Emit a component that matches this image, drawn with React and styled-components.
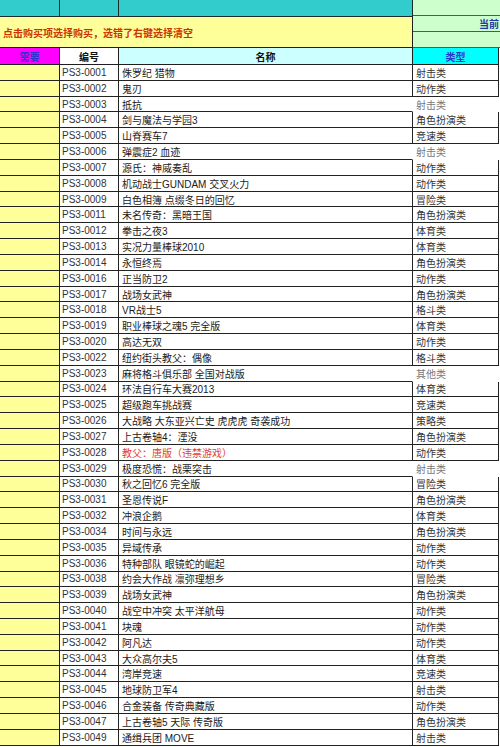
import React from "react";
import styled, { createGlobalStyle } from "styled-components";

const games = [
  ["PS3-0001", "侏罗纪 猎物", "射击类"],
  ["PS3-0002", "鬼刃", "动作类"],
  ["PS3-0003", "抵抗", "射击类", "bare"],
  ["PS3-0004", "剑与魔法与学园3", "角色扮演类"],
  ["PS3-0005", "山脊赛车7", "竞速类"],
  ["PS3-0006", "弹震症2 血迹", "射击类", "bare"],
  ["PS3-0007", "源氏：神威奏乱", "动作类"],
  ["PS3-0008", "机动战士GUNDAM 交叉火力", "动作类"],
  ["PS3-0009", "白色相簿 点缀冬日的回忆", "冒险类"],
  ["PS3-0011", "未名传奇：黑暗王国", "角色扮演类"],
  ["PS3-0012", "拳击之夜3", "体育类"],
  ["PS3-0013", "实况力量棒球2010", "体育类"],
  ["PS3-0014", "永恒终焉", "角色扮演类"],
  ["PS3-0016", "正当防卫2", "动作类"],
  ["PS3-0017", "战场女武神", "角色扮演类"],
  ["PS3-0018", "VR战士5", "格斗类"],
  ["PS3-0019", "职业棒球之魂5 完全版", "体育类"],
  ["PS3-0020", "高达无双", "动作类"],
  ["PS3-0022", "纽约街头教父：偶像", "格斗类"],
  ["PS3-0023", "麻将格斗俱乐部 全国对战版", "其他类", "bare"],
  ["PS3-0024", "环法自行车大赛2013", "体育类"],
  ["PS3-0025", "超级跑车挑战赛", "竞速类"],
  ["PS3-0026", "大战略 大东亚兴亡史 虎虎虎 奇袭成功", "策略类"],
  ["PS3-0027", "上古卷轴4：湮没", "角色扮演类"],
  ["PS3-0028", "教父：唐版（违禁游戏）", "动作类", "banned"],
  ["PS3-0029", "极度恐慌：战栗突击", "射击类", "bare"],
  ["PS3-0030", "秋之回忆6 完全版", "冒险类"],
  ["PS3-0031", "圣恩传说F", "角色扮演类"],
  ["PS3-0032", "冲浪企鹅", "体育类"],
  ["PS3-0034", "时间与永远", "角色扮演类"],
  ["PS3-0035", "异域传承", "动作类"],
  ["PS3-0036", "特种部队 眼镜蛇的崛起", "动作类"],
  ["PS3-0038", "约会大作战 凛弥理想乡", "冒险类"],
  ["PS3-0039", "战场女武神", "角色扮演类"],
  ["PS3-0040", "战空中冲突 太平洋航母", "动作类"],
  ["PS3-0041", "块魂", "动作类"],
  ["PS3-0042", "阿凡达", "动作类"],
  ["PS3-0043", "大众高尔夫5", "体育类"],
  ["PS3-0044", "湾岸竞速", "竞速类"],
  ["PS3-0045", "地球防卫军4", "射击类"],
  ["PS3-0046", "合金装备 传奇典藏版", "动作类"],
  ["PS3-0047", "上古卷轴5 天际 传奇版", "角色扮演类"],
  ["PS3-0049", "通缉兵团 MOVE", "射击类"],
];

const App = () => {
  return (
    <>
      <GlobalStyle />
      <Sheet>
        <Top>
          <TopLeft>
            <TitleRow>
              <TealCell />
              <TealCell />
              <TealCell />
            </TitleRow>
            <Notice>点击购买项选择购买，选错了右键选择清空</Notice>
          </TopLeft>
          <TopRight>
            <Band />
            <Band>当前</Band>
            <Band />
          </TopRight>
        </Top>
        <HeaderRow>
          <HeadCell $bg="#ff00ff" $color="#3333cc">需要</HeadCell>
          <HeadCell $bg="#ffffff">编号</HeadCell>
          <HeadCell $bg="#ccffff">名称</HeadCell>
          <HeadCell $bg="#00ffff" $color="#3333cc">类型</HeadCell>
        </HeaderRow>
        {games.map(([code, name, kind, flag]) => (
          <DataRow key={code}>
            <PickCell />
            <CodeCell>{code}</CodeCell>
            <NameCell $bare={flag === "bare"} $banned={flag === "banned"}>
              {name}
            </NameCell>
            <KindCell $bare={flag === "bare"}>{kind}</KindCell>
          </DataRow>
        ))}
      </Sheet>
    </>
  );
};

export default App;

const GlobalStyle = createGlobalStyle`
  html, body {
    margin: 0;
    padding: 0;
    background: #ffffff;
  }
  body {
    font-family: "Liberation Sans", "Noto Sans CJK SC", sans-serif;
    font-size: 10px;
    color: #1a1a1a;
  }
`;

const Sheet = styled.div`
  width: 500px;
  height: 747px;
  overflow: hidden;
  display: flex;
  flex-direction: column;
`;

const Top = styled.div`
  display: grid;
  grid-template-columns: 413px 87px;
  height: 48px;
  flex-shrink: 0;
`;

const TopLeft = styled.div`
  display: flex;
  flex-direction: column;
`;

const TitleRow = styled.div`
  display: grid;
  grid-template-columns: 60px 59px 294px;
  height: 17px;
`;

const TealCell = styled.div`
  background: #33cccc;
  border-right: 1px solid #1f2a2a;
  border-bottom: 1px solid #1f2a2a;
`;

const Notice = styled.div`
  height: 31px;
  box-sizing: border-box;
  background: #ffff99;
  border-right: 1px solid #1f1f1f;
  border-bottom: 1px solid #1f1f1f;
  color: #cc3300;
  font-weight: bold;
  font-size: 10px;
  display: flex;
  align-items: center;
  padding-left: 3px;
`;

const TopRight = styled.div`
  display: flex;
  flex-direction: column;
`;

const Band = styled.div`
  height: 16px;
  box-sizing: border-box;
  background: #ccffcc;
  border-bottom: 1px solid #555;
  color: #1f3aa8;
  font-weight: bold;
  white-space: nowrap;
  overflow: hidden;
  padding-left: 66px;
  display: flex;
  align-items: center;
`;

const HeaderRow = styled.div`
  display: grid;
  grid-template-columns: 60px 59px 294px 86px;
  height: 17px;
  flex-shrink: 0;
`;

const HeadCell = styled.div`
  box-sizing: border-box;
  background: ${(p) => p.$bg};
  color: ${(p) => p.$color || "#111"};
  font-weight: bold;
  border-right: 1px solid #1f1f1f;
  border-bottom: 1px solid #1f1f1f;
  display: flex;
  align-items: center;
  justify-content: center;
`;

const DataRow = styled.div`
  display: grid;
  grid-template-columns: 60px 59px 294px 86px;
  height: 15.84px;
  flex-shrink: 0;
`;

const Cell = styled.div`
  box-sizing: border-box;
  border-right: 1px solid #222;
  border-bottom: 1px solid #222;
  display: flex;
  align-items: center;
  padding-left: 3px;
  white-space: nowrap;
  overflow: hidden;
`;

const PickCell = styled(Cell)`
  background: #ffff99;
`;

const CodeCell = styled(Cell)`
  color: #333;
  padding-left: 2px;
`;

const NameCell = styled(Cell)`
  color: ${(p) => (p.$banned ? "#e03c3c" : "#1a1a1a")};
  border-right-color: ${(p) => (p.$bare ? "transparent" : "#222")};
`;

const KindCell = styled(Cell)`
  color: ${(p) => (p.$bare ? "#777" : "#333")};
  border-right-color: ${(p) => (p.$bare ? "transparent" : "#222")};
  border-bottom-color: ${(p) => (p.$bare ? "transparent" : "#222")};
`;
